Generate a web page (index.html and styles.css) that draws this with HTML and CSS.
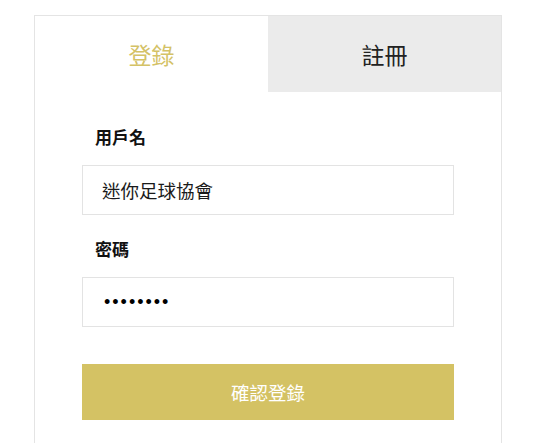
FILE: index.html
```html
<!DOCTYPE html>
<html lang="zh-Hant">
<head>
<meta charset="utf-8">
<title>登錄</title>
<link rel="stylesheet" href="styles.css">
</head>
<body>
<div class="card">
  <div class="tabs">
    <div class="tab tab-active">登錄</div>
    <div class="tab">註冊</div>
  </div>
  <form class="form">
    <label class="label" for="user">用戶名</label>
    <input class="input" id="user" type="text" value="迷你足球協會">
    <label class="label label-gap" for="pass">密碼</label>
    <input class="input input-pass" id="pass" type="password" value="12345678">
    <button class="submit" type="button">確認登錄</button>
  </form>
</div>
</body>
</html>
```
FILE: styles.css
```css
html, body {
  margin: 0;
  background: #ffffff;
}
body {
  padding: 15px 0 0 34px;
  font-family: "Noto Sans CJK TC", "Noto Sans", sans-serif;
  color: #1e1e1e;
}
.card {
  width: 466px;
  border: 1px solid #e4e4e4;
  border-bottom: none;
  height: 440px;
  box-sizing: content-box;
}
.tabs {
  display: flex;
  height: 76px;
}
.tab {
  flex: 1;
  display: flex;
  align-items: center;
  justify-content: center;
  background: #ebebeb;
  font-size: 23px;
  color: #222;
}
.tab-active {
  background: #ffffff;
  color: #d4c266;
}
.form {
  display: flex;
  flex-direction: column;
  padding: 33px 47px 0 47px;
}
.label {
  font-size: 17px;
  line-height: 24px;
  font-weight: 700;
  padding-left: 13px;
  margin-bottom: 16px;
  color: #111;
}
.label-gap {
  margin-top: 22px;
}
.input {
  height: 50px;
  box-sizing: border-box;
  border: 1px solid #e3e3e3;
  padding: 0 19px;
  font-family: "Noto Sans CJK TC", "Noto Sans", sans-serif;
  font-size: 18.5px;
  color: #1a1a1a;
  outline: none;
  background: #fff;
}
.input-pass {
  font-family: "Liberation Sans", sans-serif;
  font-size: 18px;
  letter-spacing: 2px;
  padding-left: 21px;
  color: #000;
}
.submit {
  margin-top: 37px;
  height: 56px;
  border: none;
  background: #d4c264;
  color: #ffffff;
  font-family: "Noto Sans CJK TC", "Noto Sans", sans-serif;
  font-size: 18.5px;
  cursor: pointer;
}
```
